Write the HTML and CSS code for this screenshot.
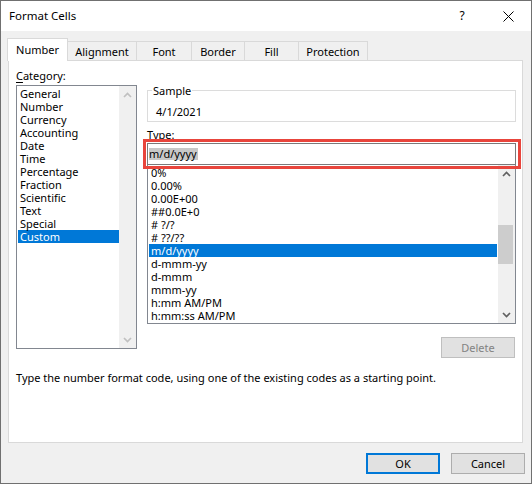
FILE: index.html
```html
<!DOCTYPE html>
<html>
<head>
<meta charset="utf-8">
<title>Format Cells</title>
<link rel="stylesheet" href="styles.css">
</head>
<body>
<div class="window">
  <div class="titlebar">
    <div class="title">Format Cells</div>
    <div class="cap-btn help">?</div>
    <div class="cap-btn close">
      <svg width="11" height="11" viewBox="0 0 11 11"><path d="M0.5 0.5L10.5 10.5M10.5 0.5L0.5 10.5" stroke="#000" stroke-width="1" fill="none"/></svg>
    </div>
  </div>
  <div class="tabs">
    <div class="tab active t-number">Number</div>
    <div class="tab t-align">Alignment</div>
    <div class="tab t-font">Font</div>
    <div class="tab t-border">Border</div>
    <div class="tab t-fill">Fill</div>
    <div class="tab t-prot">Protection</div>
  </div>
  <div class="panel">
    <div class="cols">
      <div class="left">
        <div class="label"><u>C</u>ategory:</div>
        <div class="listbox cat">
          <div class="rows">
            <div class="row">General</div>
            <div class="row">Number</div>
            <div class="row">Currency</div>
            <div class="row">Accounting</div>
            <div class="row">Date</div>
            <div class="row">Time</div>
            <div class="row">Percentage</div>
            <div class="row">Fraction</div>
            <div class="row">Scientific</div>
            <div class="row">Text</div>
            <div class="row">Special</div>
            <div class="row sel">Custom</div>
          </div>
          <div class="scroll disabled">
            <div class="arrow"><svg width="9" height="6" viewBox="0 0 9 6"><path d="M1 5L4.5 1.5L8 5" fill="none" stroke="currentColor" stroke-width="1.7"/></svg></div>
            <div class="track"></div>
            <div class="arrow"><svg width="9" height="6" viewBox="0 0 9 6"><path d="M1 1L4.5 4.5L8 1" fill="none" stroke="currentColor" stroke-width="1.7"/></svg></div>
          </div>
        </div>
      </div>
      <div class="right">
        <div class="group">
          <span class="legend">Sample</span>
          <div class="sample">4/1/2021</div>
        </div>
        <div class="label type-label"><u>T</u>ype:</div>
        <div class="typebox">
          <span class="seltext">m/d/yyyy</span>
          <div class="callout"></div>
        </div>
        <div class="listbox typelist">
          <div class="rows">
            <div class="row">0%</div>
            <div class="row">0.00%</div>
            <div class="row">0.00E+00</div>
            <div class="row">##0.0E+0</div>
            <div class="row"># ?/?</div>
            <div class="row"># ??/??</div>
            <div class="row sel">m/d/yyyy</div>
            <div class="row">d-mmm-yy</div>
            <div class="row">d-mmm</div>
            <div class="row">mmm-yy</div>
            <div class="row">h:mm AM/PM</div>
            <div class="row">h:mm:ss AM/PM</div>
          </div>
          <div class="scroll">
            <div class="arrow"><svg width="9" height="6" viewBox="0 0 9 6"><path d="M1 5L4.5 1.5L8 5" fill="none" stroke="currentColor" stroke-width="1.7"/></svg></div>
            <div class="track"><div class="thumb"></div></div>
            <div class="arrow"><svg width="9" height="6" viewBox="0 0 9 6"><path d="M1 1L4.5 4.5L8 1" fill="none" stroke="currentColor" stroke-width="1.7"/></svg></div>
          </div>
        </div>
        <div class="delete-row"><div class="btn disabled">Delete</div></div>
      </div>
    </div>
    <div class="desc">Type the number format code, using one of the existing codes as a starting point.</div>
  </div>
  <div class="footer">
    <div class="btn default">OK</div>
    <div class="btn">Cancel</div>
  </div>
</div>
</body>
</html>
```

FILE: styles.css
```css
* { box-sizing: border-box; }
html, body { margin: 0; padding: 0; background: #fff; }
body {
  font-family: "Noto Sans", "Liberation Sans", sans-serif;
  font-size: 11px;
  line-height: 16px;
  color: #000;
}
.window {
  width: 532px;
  height: 484px;
  border: 1px solid #707070;
  background: #f0f0f0;
}
.titlebar {
  height: 30px;
  background: #fff;
  display: flex;
  align-items: center;
}
.title { flex: 1; padding-left: 8px; font-size: 11.5px; }
.cap-btn {
  width: 46px;
  height: 30px;
  display: flex;
  align-items: center;
  justify-content: center;
}
.help { font-size: 12px; }

.tabs {
  display: flex;
  align-items: flex-end;
  height: 22px;
  margin-top: 7px;
  padding-left: 6px;
}
.tab {
  height: 19px;
  border: 1px solid #d9d9d9;
  border-bottom: none;
  background: #f0f0f0;
  text-align: center;
  padding-top: 2px;
  margin-left: -1px;
  white-space: nowrap;
}
.tab.active {
  height: 23px;
  margin-bottom: -1px;
  margin-left: 0;
  background: #fff;
  padding-top: 3px;
  position: relative;
  z-index: 1;
}
.t-number { width: 61px; }
.t-align { width: 70px; }
.t-font { width: 56px; }
.t-border { width: 54px; }
.t-fill { width: 55px; }
.t-prot { width: 70px; }

.panel {
  margin-left: 7px;
  width: 515px;
  height: 383px;
  background: #fff;
  border: 1px solid #d9d9d9;
  padding: 7px 6px 0 7px;
}
.cols {
  display: grid;
  grid-template-columns: 121px 369px;
  column-gap: 10px;
  align-items: start;
}
.label u { text-decoration: underline; text-underline-offset: 2px; }

.listbox {
  border: 1px solid #828790;
  background: #fff;
  display: flex;
}
.cat { height: 264px; margin-top: 1px; }
.rows { flex: 1; padding: 1px 0 0 1px; min-width: 0; }
.typelist .rows { padding: 1px 1px 0 1px; }
.row {
  height: 13px;
  line-height: 13px;
  padding-left: 2px;
  white-space: nowrap;
}
.row.sel { background: #0078d7; color: #fff; }
.scroll {
  width: 17px;
  background: #f0f0f0;
  display: flex;
  flex-direction: column;
  color: #606060;
}
.scroll.disabled { color: #c0c0c0; }
.arrow {
  height: 17px;
  display: flex;
  align-items: center;
  justify-content: center;
}
.arrow svg { display: block; }
.track { flex: 1; }
.thumb {
  margin-top: 43px;
  height: 39px;
  width: 15px;
  background: #cdcdcd;
}

.group {
  position: relative;
  margin-top: 22px;
  border: 1px solid #dcdcdc;
  padding: 13px 0 1px 8px;
}
.legend {
  position: absolute;
  left: 4px;
  top: -8px;
  padding: 0 1px;
  background: #fff;
}
.type-label { margin-top: 5px; }
.typebox {
  position: relative;
  height: 22px;
  border: 1px solid #7a7a7a;
  display: flex;
  align-items: center;
  padding-left: 1px;
}
.seltext {
  background: #c8c8c8;
  line-height: 12px;
  height: 12px;
  padding-right: 1px;
}
.callout {
  position: absolute;
  left: -5px;
  top: -5px;
  right: -6px;
  bottom: -5px;
  border: 3px solid #e8453c;
  pointer-events: none;
}
.typelist { height: 159px; border-top: none; }

.delete-row { display: flex; justify-content: flex-end; margin-top: 13px; padding-right: 1px; }
.btn {
  width: 74px;
  height: 21px;
  border: 1px solid #adadad;
  background: #e1e1e1;
  display: flex;
  align-items: center;
  justify-content: center;
}
.btn.disabled { border-color: #bfbfbf; background: #e1e1e1; color: #838383; }
.btn.default { border: 2px solid #0078d7; }
.desc { margin-top: 12px; white-space: nowrap; }

.footer {
  display: flex;
  justify-content: flex-end;
  gap: 11px;
  margin-top: 10px;
  padding-right: 6px;
}
```
